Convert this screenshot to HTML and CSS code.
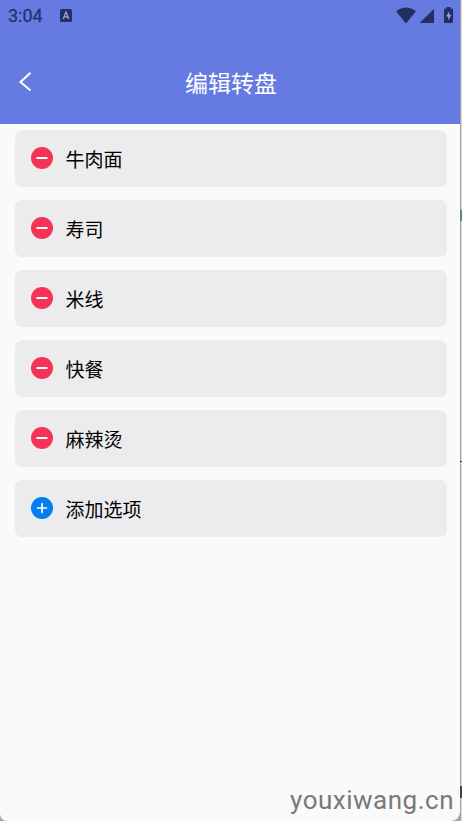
FILE: index.html
```html
<!DOCTYPE html>
<html lang="zh-CN">
<head>
<meta charset="utf-8">
<title>编辑转盘</title>
<link rel="stylesheet" href="styles.css">
</head>
<body>
<svg class="symbols" aria-hidden="true">
  <symbol id="minus" viewBox="0 0 22 22"><circle cx="11" cy="11" r="11" fill="#f53357"/><path d="M6.2 11h9.6" stroke="#fff" stroke-width="2" stroke-linecap="round"/></symbol>
  <symbol id="plus" viewBox="0 0 22 22"><circle cx="11" cy="11" r="11" fill="#057cf0"/><path d="M6.6 11h8.8M11 6.6v8.8" stroke="#fff" stroke-width="1.7" stroke-linecap="round"/></symbol>
</svg>
<div class="phone">
  <header class="header">
    <div class="status">
      <span class="time">3:04</span>
      <svg class="app" width="12" height="13" viewBox="0 0 12 13"><rect width="12" height="13" rx="1.5" fill="#25306b"/><path d="M3.2 10 6 3l2.8 7M4.3 7.8h3.4" fill="none" stroke="#a3abd8" stroke-width="1.2"/></svg>
      <svg class="signals" width="58" height="18" viewBox="0 0 58 18">
        <g fill="#242f60"><path d="M0 4.200Q10-3.400 20 4.200L10 16.500z"/><path d="M38 2v14H23.500z"/><path d="M50.500 0h4v1.500h1.500q1 0 1 1V15q0 1-1 1h-7q-1 0-1-1V2.500q0-1 1-1h1.500z"/></g>
        <path d="M53.500 4 50.200 9.500h2.100v4l3-5.700h-2.200z" fill="#9fabe0"/>
      </svg>
    </div>
    <div class="nav">
      <svg class="back" width="14" height="22" viewBox="0 0 14 22"><path d="M11.500 1.800 1.500 11l10 8.500" fill="none" stroke="#fff" stroke-width="2"/></svg>
      <h1 class="title">编辑转盘</h1>
    </div>
  </header>
  <main class="list">
    <div class="row"><svg class="icon"><use href="#minus"/></svg><span>牛肉面</span></div>
    <div class="row"><svg class="icon"><use href="#minus"/></svg><span>寿司</span></div>
    <div class="row"><svg class="icon"><use href="#minus"/></svg><span>米线</span></div>
    <div class="row"><svg class="icon"><use href="#minus"/></svg><span>快餐</span></div>
    <div class="row"><svg class="icon"><use href="#minus"/></svg><span>麻辣烫</span></div>
    <div class="row add"><svg class="icon"><use href="#plus"/></svg><span>添加选项</span></div>
  </main>
  <footer class="watermark">youxiwang.cn</footer>
</div>
<i class="edge edge-blue"></i><i class="edge edge-line"></i><i class="edge edge-dark"></i>
</body>
</html>
```
FILE: styles.css
```css
* { box-sizing: border-box; }
body {
  margin: 0;
  height: 821px;
  overflow: hidden;
  background: linear-gradient(90deg, #a5a5a5 461px, #d8d8d8 461px);
  font-family: Roboto, "Noto Sans CJK SC", sans-serif;
}
.symbols { position: absolute; width: 0; height: 0; }
.phone {
  width: 460px;
  height: 821px;
  display: flex;
  flex-direction: column;
  background: #fafafa;
  border-radius: 0 0 9px 7px;
  overflow: hidden;
}
.header { height: 124px; background: #667be1; }
.status {
  height: 32px;
  display: flex;
  align-items: center;
  padding: 0 6px 0 8px;
}
.time { width: 52px; font-size: 18px; line-height: 32px; color: #27336f; -webkit-text-stroke: 0.3px #27336f; }
.app { margin-top: -1px; }
.signals { margin-left: auto; margin-top: -1px; }
.nav {
  height: 100px;
  display: grid;
  grid-template-columns: 14px 1fr 14px;
  align-items: center;
  padding: 0 17px 0 19px;
}
.title {
  margin: 0;
  padding-top: 5px;
  text-align: center;
  font-size: 23px;
  line-height: 34px;
  font-weight: 400;
  color: #fff;
}
.list {
  flex: 1;
  display: flex;
  flex-direction: column;
  gap: 13px;
  padding: 6px 13px 0 15px;
}
.row {
  height: 57px;
  display: flex;
  align-items: center;
  gap: 13px;
  padding: 0 0 1px 15.5px;
  border-radius: 7px;
  background: #ececec;
  color: #000;
  font-size: 19px;
}
.row.add { background: #ececee; }
.icon { width: 22px; height: 22px; }
.watermark {
  height: 37px;
  padding-right: 6px;
  text-align: right;
  font-size: 26px;
  letter-spacing: 0.5px;
  line-height: 32px;
  color: #797979;
}
.edge { position: absolute; left: 460px; width: 2px; }
.edge-blue { top: 210px; height: 11px; background: #66818f; }
.edge-line { top: 461px; height: 1px; background: #333; }
.edge-dark { top: 786px; height: 12px; background: #444; }
```
